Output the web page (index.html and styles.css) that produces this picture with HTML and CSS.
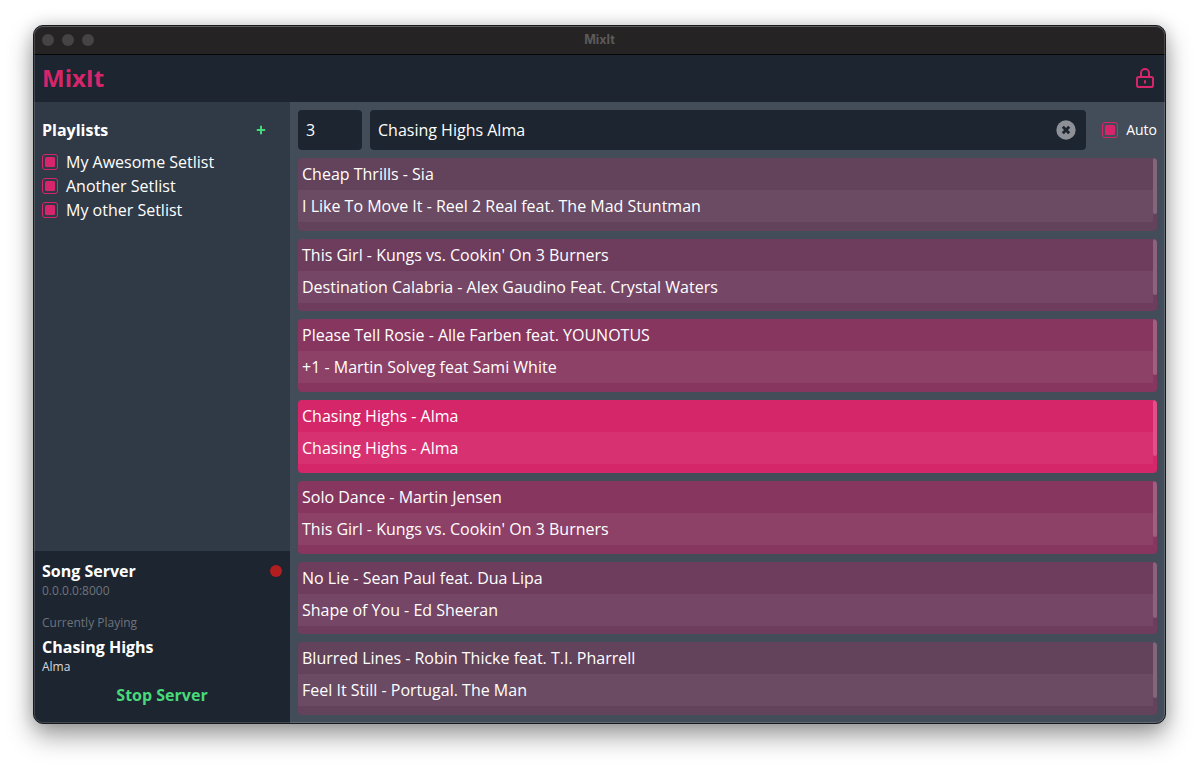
FILE: index.html
```html
<!DOCTYPE html>
<html lang="en">
<head>
<meta charset="utf-8">
<title>MixIt</title>
<link rel="stylesheet" href="styles.css">
</head>
<body>
<div class="window">
  <div class="titlebar">
    <div class="lights"><i></i><i></i><i></i></div>
    <span class="window-title">MixIt</span>
  </div>
  <header class="header">
    <h1 class="logo">MixIt</h1>
    <svg class="lock" width="20" height="22" viewBox="0 0 20 22" fill="none" stroke="currentColor" stroke-width="2">
      <rect x="2" y="10" width="16" height="10" rx="1.8"/>
      <path d="M6 10V6A4 4 0 0 1 14 6V10"/>
      <path d="M10 13.3v3.2"/>
    </svg>
  </header>
  <div class="body">
    <aside class="sidebar">
      <section class="playlists">
        <div class="heading"><h2>Playlists</h2>
          <svg class="plus" width="10" height="10" viewBox="0 0 10 10" stroke="currentColor" stroke-width="2"><path d="M.8 5h8.4M5 .8v8.4"/></svg>
        </div>
        <label class="check"><i class="box"></i>My Awesome Setlist</label>
        <label class="check"><i class="box"></i>Another Setlist</label>
        <label class="check"><i class="box"></i>My other Setlist</label>
      </section>
      <section class="server">
        <div class="server-head"><h2>Song Server</h2><i class="status"></i></div>
        <div class="small muted">0.0.0.0:8000</div>
        <div class="small muted label">Currently Playing</div>
        <div class="song">Chasing Highs</div>
        <div class="small artist">Alma</div>
        <div class="stop">Stop Server</div>
      </section>
    </aside>
    <main class="main">
      <div class="controls">
        <div class="field count">3</div>
        <div class="field search"><span>Chasing Highs Alma</span>
          <svg width="20" height="20" viewBox="0 0 20 20"><circle cx="10" cy="10" r="9.7" fill="#8d9197"/><path d="M6.8 6.8l6.4 6.4M13.2 6.8l-6.4 6.4" stroke="#1d2530" stroke-width="2.9"/></svg>
        </div>
        <label class="check auto"><i class="box"></i>Auto</label>
      </div>
      <div class="cards">
        <div class="card far"><div class="row">Cheap Thrills - Sia</div><div class="row">I Like To Move It - Reel 2 Real feat. The Mad Stuntman</div><i class="bar"></i></div>
        <div class="card mid"><div class="row">This Girl - Kungs vs. Cookin' On 3 Burners</div><div class="row">Destination Calabria - Alex Gaudino Feat. Crystal Waters</div><i class="bar"></i></div>
        <div class="card near"><div class="row">Please Tell Rosie - Alle Farben feat. YOUNOTUS</div><div class="row">+1 - Martin Solveg feat Sami White</div><i class="bar"></i></div>
        <div class="card active"><div class="row">Chasing Highs - Alma</div><div class="row">Chasing Highs - Alma</div><i class="bar"></i></div>
        <div class="card near"><div class="row">Solo Dance - Martin Jensen</div><div class="row">This Girl - Kungs vs. Cookin' On 3 Burners</div><i class="bar"></i></div>
        <div class="card mid"><div class="row">No Lie - Sean Paul feat. Dua Lipa</div><div class="row">Shape of You - Ed Sheeran</div><i class="bar"></i></div>
        <div class="card far"><div class="row">Blurred Lines - Robin Thicke feat. T.I. Pharrell</div><div class="row">Feel It Still - Portugal. The Man</div><i class="bar"></i></div>
      </div>
    </main>
  </div>
</div>
</body>
</html>
```
FILE: styles.css
```css
* { box-sizing: border-box; }
body {
  margin: 0;
  height: 765px;
  padding: 25px 33px;
  overflow: hidden;
  background: #fff;
  color: #fff;
  font: 16px/24px "Open Sans", "Noto Sans", sans-serif;
}
h1, h2 { margin: 0; font-size: 16px; line-height: 24px; font-weight: 700; }
svg { display: block; flex: none; }

.window {
  position: relative;
  display: flex;
  flex-direction: column;
  width: 1133px;
  height: 699px;
  border: 1px solid #17191d;
  border-radius: 10px;
  overflow: hidden;
  background: #434d59;
  box-shadow: 0 12px 26px rgba(0, 0, 0, .38), 0 0 16px rgba(0, 0, 0, .16);
}
.window::after {
  content: "";
  position: absolute;
  inset: 0;
  border-radius: 9px;
  box-shadow: inset 0 0 0 1px rgba(255, 255, 255, .16), inset 0 1px 0 rgba(255, 255, 255, .12);
  pointer-events: none;
}
.titlebar {
  display: grid;
  grid-template-columns: 1fr auto 1fr;
  align-items: center;
  height: 29px;
  padding: 0 0 0 8px;
  background: #252323;
  border-bottom: 1px solid #050506;
}
.titlebar { padding-right: 8px; }
.lights { display: flex; gap: 8px; }
.lights i { width: 12px; height: 12px; border-radius: 50%; background: #454344; }
.window-title { font-family: Inter, sans-serif; font-size: 12.5px; line-height: 16px; font-weight: 700; color: #5c5a5b; }
.header {
  display: flex;
  align-items: center;
  justify-content: space-between;
  height: 47px;
  padding: 0 10px 2px 8px;
  background: #1d2530;
  color: #d6256b;
}
.logo { font-size: 24px; line-height: 32px; }

.body { display: flex; flex: 1; min-height: 0; }
.sidebar { display: flex; flex-direction: column; width: 256px; background: #303a46; }
.playlists { flex: 1; padding: 16px 8px; }
.heading { display: flex; align-items: center; justify-content: space-between; margin-bottom: 8px; padding-right: 16px; }
.plus { color: #48d97b; }
.check { display: flex; align-items: center; gap: 8px; }
.box { flex: none; width: 16px; height: 16px; border: 1px solid #d6256b; border-radius: 3px; padding: 2px; }
.box::before { content: ""; display: block; width: 10px; height: 10px; border-radius: 1.5px; background: #d6256b; }

.server { height: 172px; padding: 8px; background: #1d2530; }
.server-head { display: flex; align-items: center; justify-content: space-between; }
.status { width: 12px; height: 12px; border-radius: 50%; background: #b01e20; }
.small { font-size: 12px; line-height: 16px; }
.muted { color: #6f747c; }
.label { margin: 16px 0 4px; }
.song { font-weight: 700; }
.artist { color: #d8dadd; line-height: 15px; }
.stop { margin-top: 9px; text-align: center; font-weight: 700; color: #48d97b; }

.main { display: flex; flex: 1; flex-direction: column; gap: 8px; padding: 8px; min-width: 0; }
.controls { display: flex; gap: 8px; height: 40px; }
.field { display: flex; align-items: center; justify-content: space-between; border-radius: 4px; padding: 0 8px; background: #1d2530; }
.count { width: 64px; }
.search { width: 716px; padding-right: 10px; }
.auto { margin-left: auto; font-size: 14px; }

.cards { display: grid; grid-template-rows: repeat(7, 1fr); gap: 8px; flex: 1; min-height: 0; }
.card { position: relative; border-radius: 4px; overflow: hidden; }
.row { height: 32px; margin-right: 4px; padding: 4px; }
.row:nth-child(2) { background: rgba(255, 255, 255, .05); }
.bar { position: absolute; top: 0; right: 0; width: 4px; height: 56px; border-radius: 2px; background: rgba(255, 255, 255, .2); }
.far { background: #63425b; }
.mid { background: #6e3d5d; }
.near { background: #87375f; }
.active { background: #d6266a; }
```
